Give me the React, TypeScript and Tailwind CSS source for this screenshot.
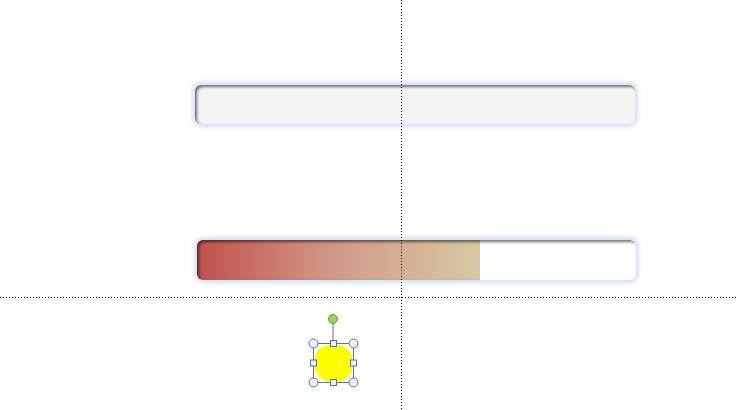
import React from "react";

export default function App() {
  return (
    <div className="relative w-[737px] h-[410px] bg-white overflow-hidden font-['Liberation_Sans',sans-serif]">
      <div className="flex flex-col pt-[85px] pl-[195px]">
        <div className="w-[440px] h-[39px] rounded-[6px] bg-[#f4f4f2] shadow-[0_0_4px_3px_#d6e1f1,inset_2px_2px_3px_rgba(0,0,0,0.55)]" />
        <div className="mt-[116px] ml-[2px] w-[439px] h-[40px] rounded-[6px] bg-white shadow-[0_0_4px_3px_#d6e1f1] overflow-hidden relative flex">
          <div className="w-[283px] h-full bg-gradient-to-r from-[#c0504d] via-[#d19b8a] to-[#d5c9a1]" />
          <div className="absolute inset-0 rounded-[6px] shadow-[inset_2px_2px_3px_rgba(0,0,0,0.55)]" />
        </div>
      </div>

      {/* guides */}
      <div className="absolute left-[401px] top-0 w-px h-full bg-[repeating-linear-gradient(to_bottom,#000_0_1px,transparent_1px_3px)]" />
      <div className="absolute top-[297px] left-0 h-px w-full bg-[repeating-linear-gradient(to_right,#000_0_1px,transparent_1px_3px)]" />

      {/* selected shape */}
      <svg className="absolute left-[305px] top-[310px]" width="56" height="80" viewBox="0 0 56 80">
        <rect x="9.5" y="34.5" width="38" height="37" rx="16" fill="#ffff00" />
        <line x1="28" y1="13" x2="28" y2="33" stroke="#5a7590" strokeWidth="1" />
        <rect x="8.5" y="33.5" width="40" height="39" fill="none" stroke="#5a7590" strokeWidth="1" />
        <circle cx="28" cy="9" r="4.5" fill="#8fd65c" stroke="#5e9c3c" strokeWidth="1" />
        {[
          [8.5, 33.5],
          [48.5, 33.5],
          [8.5, 72.5],
          [48.5, 72.5],
        ].map(([x, y], i) => (
          <circle key={i} cx={x} cy={y} r="4.5" fill="#e8f0fa" stroke="#5a7590" strokeWidth="1" />
        ))}
        {[
          [28.5, 33.5],
          [8.5, 53],
          [48.5, 53],
          [28.5, 72.5],
        ].map(([x, y], i) => (
          <rect key={i} x={x - 3} y={y - 3} width="6" height="6" fill="#e8f0fa" stroke="#5a7590" strokeWidth="1" />
        ))}
      </svg>
    </div>
  );
}
